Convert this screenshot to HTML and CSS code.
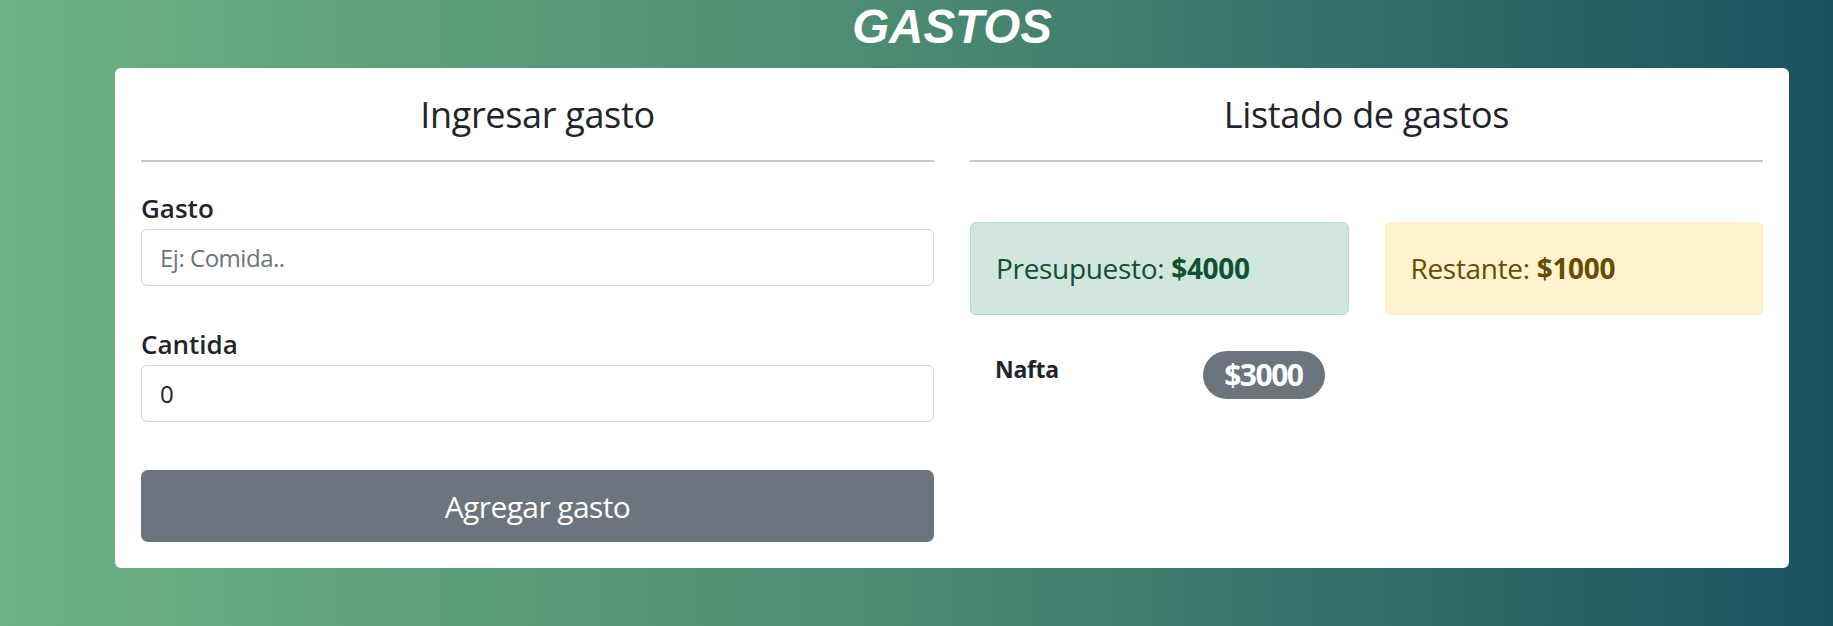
FILE: index.html
```html
<!DOCTYPE html>
<html lang="es">
<head>
<meta charset="utf-8">
<title>Gastos</title>
<link rel="stylesheet" href="styles.css">
</head>
<body>
<main class="page">
  <h1 class="title">GASTOS</h1>
  <section class="card">
    <div class="col">
      <h2 class="col-title">Ingresar gasto</h2>
      <hr class="divider">
      <form class="form">
        <div class="field">
          <label class="field-label" for="gasto">Gasto</label>
          <input class="field-input" id="gasto" type="text" placeholder="Ej: Comida..">
        </div>
        <div class="field field-next">
          <label class="field-label" for="cantidad">Cantida</label>
          <input class="field-input" id="cantidad" type="number" value="0">
        </div>
        <button class="btn-submit" type="button">Agregar gasto</button>
      </form>
    </div>
    <div class="col">
      <h2 class="col-title">Listado de gastos</h2>
      <hr class="divider">
      <div class="alerts">
        <div class="alert alert-success">Presupuesto: <b>$4000</b></div>
        <div class="alert alert-warning">Restante: <b>$1000</b></div>
      </div>
      <ul class="expenses">
        <li class="expense">
          <span class="expense-name">Nafta</span>
          <span class="badge">$3000</span>
        </li>
      </ul>
    </div>
  </section>
</main>
</body>
</html>
```
FILE: styles.css
```css
html {
  min-height: 100%;
  background: linear-gradient(to right, #6eb383 0%, #4a8a72 50%, #1a5260 100%);
}

body {
  margin: 0;
  font-family: "Open Sans", "Noto Sans", sans-serif;
  color: #212529;
  letter-spacing: -0.02em;
}

.page {
  padding: 0 44px 0 115px;
}

.title {
  margin: 0;
  height: 68px;
  font-family: "Liberation Sans", Arial, sans-serif;
  font-style: italic;
  font-weight: 700;
  font-size: 47.5px;
  line-height: 53px;
  letter-spacing: 0;
  text-align: center;
  color: #fff;
}

.card {
  background: #fff;
  border-radius: 6px;
  padding: 25px 26px 26px;
  display: grid;
  grid-template-columns: 1fr 1fr;
  column-gap: 36px;
}

.col-title {
  margin: 0;
  font-size: 36px;
  font-weight: 500;
  line-height: 43px;
  text-align: center;
}

.divider {
  margin: 24px 0;
  border: 0;
  border-top: 2px solid #c8c8c8;
}

.form {
  padding-top: 4px;
}

.field-label {
  display: block;
  font-size: 26px;
  font-weight: 600;
  line-height: 36px;
  letter-spacing: 0;
  margin-bottom: 3px;
}

.field-next {
  margin-top: 40px;
}

.field-input {
  display: block;
  width: 100%;
  box-sizing: border-box;
  height: 57px;
  border: 1px solid #d3d6da;
  border-radius: 6px;
  padding: 0 18px;
  font-family: "Open Sans", sans-serif;
  font-size: 24px;
  letter-spacing: -0.02em;
  color: #212529;
  background: #fff;
  outline: none;
}

.field-input::placeholder {
  color: #6c757d;
}

.field-input::-webkit-outer-spin-button,
.field-input::-webkit-inner-spin-button {
  -webkit-appearance: none;
  margin: 0;
}

.btn-submit {
  display: block;
  width: 100%;
  height: 72px;
  margin-top: 48px;
  border: 0;
  border-radius: 7px;
  background: #6c757d;
  color: #fff;
  font-family: "Open Sans", sans-serif;
  font-size: 30px;
  letter-spacing: -0.02em;
}

.alerts {
  margin-top: 60px;
  display: grid;
  grid-template-columns: 1fr 1fr;
  column-gap: 36px;
}

.alert {
  border: 1px solid transparent;
  border-radius: 6px;
  padding: 23px 25px;
  font-size: 28px;
  line-height: 45px;
}

.alert b {
  font-weight: 700;
}

.alert-success {
  background: #d1e7dd;
  border-color: #badbcc;
  color: #0f5132;
}

.alert-warning {
  background: #fff3cd;
  border-color: #ffecb5;
  color: #664d03;
}

.expenses {
  list-style: none;
  margin: 36px 0 0;
  padding: 0;
  display: grid;
  grid-template-columns: 1fr 1fr;
  column-gap: 36px;
}

.expense {
  display: flex;
  justify-content: space-between;
  align-items: flex-start;
  padding: 0 24px 0 25px;
}

.expense-name {
  font-size: 23px;
  font-weight: 700;
  line-height: 36px;
}

.badge {
  background: #6c757d;
  color: #fff;
  font-size: 30px;
  font-weight: 700;
  line-height: 1;
  letter-spacing: -1.5px;
  padding: 9px 22px 9px 21px;
  border-radius: 50px;
}
```
